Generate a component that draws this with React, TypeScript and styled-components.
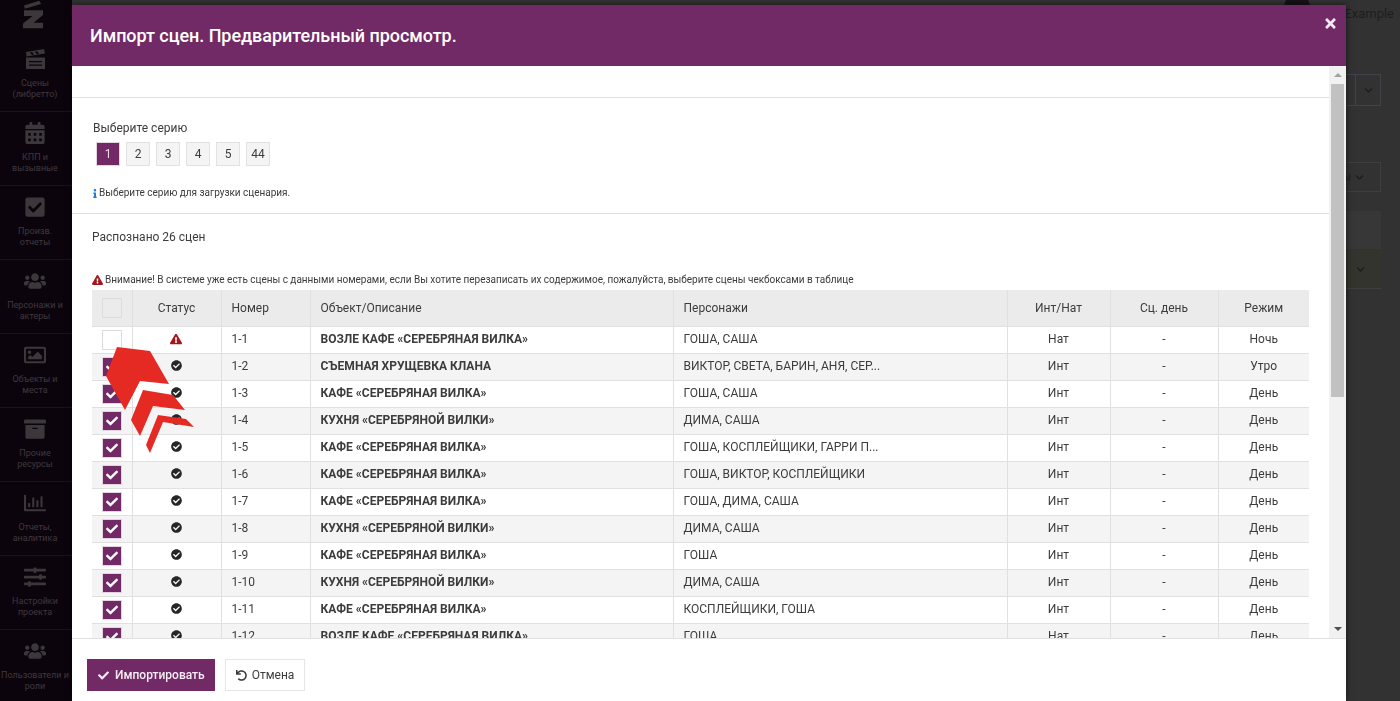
import React from "react";
import styled, { createGlobalStyle } from "styled-components";
import {
  FaArchive,
  FaCalendarAlt,
  FaCheck,
  FaCheckCircle,
  FaCheckSquare,
  FaChevronDown,
  FaExclamationTriangle,
  FaInfo,
  FaRegChartBar,
  FaRegImage,
  FaSlidersH,
  FaTimes,
  FaUndo,
  FaUsers,
} from "react-icons/fa";

const Colors = {
  purple: "#722a66",
  line: "#e0e0e0",
  text: "#3c3c3c",
};

const GlobalStyle = createGlobalStyle`
  html, body {
    margin: 0;
    height: 100%;
    overflow: hidden;
    background: #323232;
    font-family: Roboto, "Liberation Sans", sans-serif;
    font-size: 12px;
    color: ${Colors.text};
  }
`;

const Page = styled.div`
  display: flex;
  height: 701px;
  overflow: hidden;
`;

const Sidebar = styled.nav`
  width: 72px;
  flex-shrink: 0;
  background: #0c040c;
`;

const Logo = styled.div`
  height: 38px;
  padding-right: 6px;
  box-sizing: border-box;
  display: flex;
  justify-content: center;
  align-items: flex-start;
`;

const NavItem = styled.div`
  height: 74px;
  box-sizing: border-box;
  padding: 10px 2px 0 0;
  border-bottom: 1px solid #1a141a;
  text-align: center;
  color: #3f383e;
  font-size: 9px;
  line-height: 11px;
  white-space: nowrap;

  svg {
    display: block;
    width: 22px;
    height: 22px;
    margin: 0 auto 8px;
    color: #3b373b;
  }

  &:last-child {
    border-bottom: none;
  }
`;

const Backdrop = styled.main`
  flex: 1;
  padding-right: 19px;
  color: #1e1e1e;
`;

const TopBar = styled.div`
  height: 26px;
  margin-right: -13px;
  display: flex;
  justify-content: flex-end;
  align-items: center;
  gap: 6px;
  font-size: 13px;
`;

const Avatar = styled.div`
  width: 26px;
  height: 26px;
  margin-top: -12px;
  border-radius: 50%;
  background: #161116;
`;

const BackSelect = styled.div`
  width: 120px;
  height: 32px;
  margin: 48px 0 0 auto;
  box-sizing: border-box;
  border: 1px solid #42424a;
  display: flex;
  justify-content: flex-end;
`;

const BackCaret = styled.div`
  width: 24px;
  border-left: 1px solid #42424a;
  display: flex;
  align-items: center;
  justify-content: center;
  font-size: 9px;
  color: #1e1e26;
`;

const BackFilter = styled.div`
  width: 120px;
  height: 30px;
  margin: 56px 0 0 auto;
  box-sizing: border-box;
  border: 1px solid #3e3e3e;
  display: flex;
  justify-content: flex-end;
  align-items: center;
  gap: 4px;
  padding-right: 16px;
  font-size: 12px;

  svg {
    font-size: 9px;
  }
`;

const BackBand = styled.div<{ $olive?: boolean }>`
  height: 38px;
  margin-top: ${(p) => (p.$olive ? "1px" : "19px")};
  display: flex;
  justify-content: flex-end;
  align-items: center;
  padding-right: 16px;
  font-size: 9px;
  background: ${(p) => (p.$olive ? "#34342e" : "#373737")};
  border-bottom: ${(p) => (p.$olive ? "1px solid #3e3e3e" : "none")};
`;

const Modal = styled.section`
  position: fixed;
  left: 72px;
  top: 5px;
  width: 1274px;
  height: 696px;
  display: flex;
  flex-direction: column;
  background: #fff;
  box-shadow: 0 0 6px rgba(0, 0, 0, 0.6);
`;

const ModalHeader = styled.header`
  height: 61px;
  flex-shrink: 0;
  box-sizing: border-box;
  padding: 0 9px 0 18px;
  display: flex;
  justify-content: space-between;
  background: ${Colors.purple};
  color: #fff;
`;

const ModalTitle = styled.h1`
  margin: 0;
  font-size: 18px;
  font-weight: 500;
  letter-spacing: -0.05px;
  line-height: 62px;
`;

const CloseIcon = styled(FaTimes)`
  width: 13px;
  height: 15px;
  margin-top: 11px;
  color: #f3e8f1;
`;

const ModalBody = styled.div`
  flex: 1;
  min-height: 0;
  display: flex;
`;

const ScrollArea = styled.div`
  flex: 1;
  min-width: 0;
  overflow: hidden;
`;

const Section = styled.div<{ $height?: number }>`
  height: ${(p) => (p.$height ? `${p.$height}px` : "auto")};
  box-sizing: border-box;
  border-bottom: 1px solid ${Colors.line};
`;

const SeriesSection = styled(Section)`
  padding: 22px 21px 0;
`;

const FieldLabel = styled.div`
  line-height: 17px;
`;

const SeriesList = styled.div`
  display: flex;
  gap: 6px;
  margin: 5px 0 0 3px;
`;

const SeriesButton = styled.div<{ $active?: boolean }>`
  width: 24px;
  height: 24px;
  box-sizing: border-box;
  display: flex;
  align-items: center;
  justify-content: center;
  border: 1px solid ${(p) => (p.$active ? "#e3d5e0" : "#e2e2e2")};
  background: ${(p) => (p.$active ? Colors.purple : "#f4f4f4")};
  color: ${(p) => (p.$active ? "#e8d8e5" : Colors.text)};
`;

const HelpText = styled.div`
  display: flex;
  align-items: center;
  font-size: 10px;
  line-height: 14px;
  letter-spacing: -0.015px;

  svg {
    flex-shrink: 0;
    margin-right: 2px;
  }
`;

const InfoText = styled(HelpText)`
  margin-top: 20px;

  svg {
    width: 4px;
    height: 9px;
    color: #1b7fd6;
  }
`;

const ScenesSection = styled.div`
  padding: 15px 20px 0;
`;

const RecognizedLabel = styled.div`
  line-height: 17px;
`;

const WarningText = styled(HelpText)`
  margin-top: 27px;
  margin-bottom: 3px;

  svg {
    width: 11px;
    height: 10px;
    color: #a5151c;
  }
`;

const Table = styled.table`
  width: 1217px;
  border-collapse: collapse;
  table-layout: fixed;
`;

const HeadCell = styled.th<{ $left?: boolean }>`
  height: 36px;
  box-sizing: border-box;
  padding: 0 ${(p) => (p.$left ? "10px" : "0")};
  background: #ebebeb;
  border-left: 1px solid ${Colors.line};
  border-bottom: 1px solid ${Colors.line};
  font-weight: 400;
  text-align: ${(p) => (p.$left ? "left" : "center")};

  &:first-child {
    border-left: none;
  }
`;

const Row = styled.tr`
  &:nth-child(even) td {
    background: #f4f4f4;
  }
`;

const Cell = styled.td<{ $left?: boolean; $bold?: boolean }>`
  height: 27px;
  box-sizing: border-box;
  padding: 0 ${(p) => (p.$left ? "10px" : "0")} 2px;
  border-left: 1px solid ${Colors.line};
  border-bottom: 1px solid ${Colors.line};
  font-weight: ${(p) => (p.$bold ? 700 : 400)};
  text-align: ${(p) => (p.$left ? "left" : "center")};
  white-space: nowrap;
  overflow: hidden;

  &:first-child {
    border-left: none;
  }
`;

const StatusCell = styled(Cell)`
  padding-right: 1px;
`;

const CheckBox = styled.div<{ $checked?: boolean; $muted?: boolean }>`
  width: 20px;
  height: 20px;
  margin-left: 10px;
  box-sizing: border-box;
  display: flex;
  align-items: center;
  justify-content: center;
  border: 1px solid ${(p) => (p.$checked ? "#e3d5e0" : "#dcdcdc")};
  background: ${(p) =>
    p.$checked ? Colors.purple : p.$muted ? "#ebebeb" : "#fff"};
  color: #fff;

  svg {
    width: 12px;
    height: 12px;
  }
`;

const RowCheckBox = styled(CheckBox)`
  margin-top: 2px;
`;

const StatusOk = styled(FaCheckCircle)`
  display: block;
  width: 11px;
  height: 11px;
  margin: 0 auto;
  color: #262626;
`;

const StatusWarn = styled(FaExclamationTriangle)`
  display: block;
  width: 12px;
  height: 12px;
  margin: 0 auto;
  color: #a5151c;
`;

const Scrollbar = styled.div`
  width: 17px;
  flex-shrink: 0;
  display: flex;
  flex-direction: column;
  align-items: center;
  background: #f1f1f1;
`;

const ScrollArrow = styled.div<{ $down?: boolean }>`
  height: 18px;
  flex-shrink: 0;
  display: flex;
  align-items: center;
  justify-content: center;
  margin-top: ${(p) => (p.$down ? "auto" : "0")};

  &::before {
    content: "";
    border-left: 4px solid transparent;
    border-right: 4px solid transparent;
    ${(p) =>
      p.$down
        ? "border-top: 4px solid #505050;"
        : "border-bottom: 4px solid #a3a3a3;"}
  }
`;

const ScrollThumb = styled.div`
  width: 13px;
  height: 313px;
  background: #c1c1c1;
`;

const ModalFooter = styled.footer`
  height: 63px;
  flex-shrink: 0;
  box-sizing: border-box;
  padding: 20px 15px 0;
  border-top: 1px solid ${Colors.line};
  display: flex;
  align-items: flex-start;
  gap: 10px;
`;

const Button = styled.div<{ $primary?: boolean }>`
  height: 32px;
  box-sizing: border-box;
  display: flex;
  align-items: center;
  gap: ${(p) => (p.$primary ? "6px" : "5px")};
  padding: ${(p) => (p.$primary ? "0 9px 0 10px" : "0 10px")};
  font-weight: ${(p) => (p.$primary ? 500 : 400)};
  background: ${(p) => (p.$primary ? Colors.purple : "#fff")};
  color: ${(p) => (p.$primary ? "#f5edf3" : Colors.text)};
  border: 1px solid ${(p) => (p.$primary ? Colors.purple : "#e6e6e6")};

  svg {
    width: 11px;
    height: 11px;
  }
`;

const Arrows = styled.svg`
  position: fixed;
  left: 100px;
  top: 342px;
  pointer-events: none;
`;

const ClapperIcon = () => (
  <svg viewBox="0 0 22 22" fill="currentColor">
    <path
      d="M2 4 20 1l1 4.5L2.5 8.5zM6 4.5l2 2.5 2-.4-2-2.5zM11 3.7l2 2.5 2-.4-2-2.5z"
      fillRule="evenodd"
    />
    <path
      d="M2 9.5h19V21H2zM5 13v1.2h13V13zm0 3.5v1.2h13v-1.2z"
      fillRule="evenodd"
    />
  </svg>
);

const series = ["1", "2", "3", "4", "5", "44"];

const columns = [
  { title: "Статус", width: 89 },
  { title: "Номер", width: 89, left: true },
  { title: "Объект/Описание", width: 363, left: true },
  { title: "Персонажи", width: 334, left: true },
  { title: "Инт/Нат", width: 103 },
  { title: "Сц. день", width: 108 },
  { title: "Режим", width: 91 },
];

const CAFE = "КАФЕ «СЕРЕБРЯНАЯ ВИЛКА»";
const KITCHEN = "КУХНЯ «СЕРЕБРЯНОЙ ВИЛКИ»";
const NEAR = "ВОЗЛЕ КАФЕ «СЕРЕБРЯНАЯ ВИЛКА»";

const scenes = [
  { place: NEAR, cast: "ГОША, САША", kind: "Нат", mode: "Ночь" },
  {
    place: "СЪЕМНАЯ ХРУЩЕВКА КЛАНА",
    cast: "ВИКТОР, СВЕТА, БАРИН, АНЯ, СЕР...",
    kind: "Инт",
    mode: "Утро",
  },
  { place: CAFE, cast: "ГОША, САША", kind: "Инт", mode: "День" },
  { place: KITCHEN, cast: "ДИМА, САША", kind: "Инт", mode: "День" },
  {
    place: CAFE,
    cast: "ГОША, КОСПЛЕЙЩИКИ, ГАРРИ П...",
    kind: "Инт",
    mode: "День",
  },
  { place: CAFE, cast: "ГОША, ВИКТОР, КОСПЛЕЙЩИКИ", kind: "Инт", mode: "День" },
  { place: CAFE, cast: "ГОША, ДИМА, САША", kind: "Инт", mode: "День" },
  { place: KITCHEN, cast: "ДИМА, САША", kind: "Инт", mode: "День" },
  { place: CAFE, cast: "ГОША", kind: "Инт", mode: "День" },
  { place: KITCHEN, cast: "ДИМА, САША", kind: "Инт", mode: "День" },
  { place: CAFE, cast: "КОСПЛЕЙЩИКИ, ГОША", kind: "Инт", mode: "День" },
  { place: NEAR, cast: "ГОША", kind: "Нат", mode: "День" },
];

const navItems = [
  { icon: <ClapperIcon />, label: ["Сцены", "(либретто)"] },
  { icon: <FaCalendarAlt />, label: ["КПП и", "вызывные"] },
  { icon: <FaCheckSquare />, label: ["Произв.", "отчеты"] },
  { icon: <FaUsers />, label: ["Персонажи и", "актеры"] },
  { icon: <FaRegImage />, label: ["Объекты и", "места"] },
  { icon: <FaArchive />, label: ["Прочие", "ресурсы"] },
  { icon: <FaRegChartBar />, label: ["Отчеты,", "аналитика"] },
  { icon: <FaSlidersH />, label: ["Настройки", "проекта"] },
  { icon: <FaUsers />, label: ["Пользователи и", "роли"] },
];

export default function App() {
  return (
    <>
      <GlobalStyle />
      <Page>
        <Sidebar>
          <Logo>
            <svg width="21" height="30" viewBox="0 0 22 30" fill="#3b373b">
              <path d="M1 5 17 0l2 3.5L2 8.5z" />
              <path d="M1 10h20v5L11 23h10v6H0v-5l10-8H1z" />
            </svg>
          </Logo>
          {navItems.map((item) => (
            <NavItem key={item.label.join(" ")}>
              {item.icon}
              {item.label[0]}
              <br />
              {item.label[1]}
            </NavItem>
          ))}
        </Sidebar>
        <Backdrop>
          <TopBar>
            <Avatar />
            Test Example
          </TopBar>
          <BackSelect>
            <BackCaret>
              <FaChevronDown />
            </BackCaret>
          </BackSelect>
          <BackFilter>
            Все сцены
            <FaChevronDown />
          </BackFilter>
          <BackBand />
          <BackBand $olive>
            <FaChevronDown />
          </BackBand>
        </Backdrop>
      </Page>

      <Modal>
        <ModalHeader>
          <ModalTitle>Импорт сцен. Предварительный просмотр.</ModalTitle>
          <CloseIcon />
        </ModalHeader>
        <ModalBody>
          <ScrollArea>
            <Section $height={32} />
            <SeriesSection $height={116}>
              <FieldLabel>Выберите серию</FieldLabel>
              <SeriesList>
                {series.map((n, i) => (
                  <SeriesButton key={n} $active={i === 0}>
                    {n}
                  </SeriesButton>
                ))}
              </SeriesList>
              <InfoText>
                <FaInfo />
                Выберите серию для загрузки сценария.
              </InfoText>
            </SeriesSection>
            <ScenesSection>
              <RecognizedLabel>Распознано 26 сцен</RecognizedLabel>
              <WarningText>
                <FaExclamationTriangle />
                Внимание! В системе уже есть сцены с данными номерами, если Вы
                хотите перезаписать их содержимое, пожалуйста, выберите сцены
                чекбоксами в таблице
              </WarningText>
              <Table>
                <colgroup>
                  <col width={40} />
                  {columns.map((c) => (
                    <col key={c.title} width={c.width} />
                  ))}
                </colgroup>
                <thead>
                  <tr>
                    <HeadCell $left={false}>
                      <CheckBox $muted />
                    </HeadCell>
                    {columns.map((c) => (
                      <HeadCell key={c.title} $left={c.left}>
                        {c.title}
                      </HeadCell>
                    ))}
                  </tr>
                </thead>
                <tbody>
                  {scenes.map((s, i) => (
                    <Row key={i}>
                      <Cell>
                        <RowCheckBox $checked={i > 0}>
                          {i > 0 && <FaCheck />}
                        </RowCheckBox>
                      </Cell>
                      <StatusCell>
                        {i === 0 ? <StatusWarn /> : <StatusOk />}
                      </StatusCell>
                      <Cell $left>1-{i + 1}</Cell>
                      <Cell $left $bold>
                        {s.place}
                      </Cell>
                      <Cell $left>{s.cast}</Cell>
                      <Cell>{s.kind}</Cell>
                      <Cell>-</Cell>
                      <Cell>{s.mode}</Cell>
                    </Row>
                  ))}
                </tbody>
              </Table>
            </ScenesSection>
          </ScrollArea>
          <Scrollbar>
            <ScrollArrow />
            <ScrollThumb />
            <ScrollArrow $down />
          </Scrollbar>
        </ModalBody>
        <ModalFooter>
          <Button $primary>
            <FaCheck />
            Импортировать
          </Button>
          <Button>
            <FaUndo />
            Отмена
          </Button>
        </ModalFooter>
      </Modal>

      <Arrows width="100" height="115" viewBox="100 342 100 115" fill="#e52a24">
        <polygon points="117,347 150,351 169,384 140,381 125,410 106,376" />
        <polygon points="143,390 173,395 185,410 153,406 140,436 131,420" />
        <polygon points="158,415 186,419 194,427 163,422 150,453 146,445" />
      </Arrows>
    </>
  );
}
